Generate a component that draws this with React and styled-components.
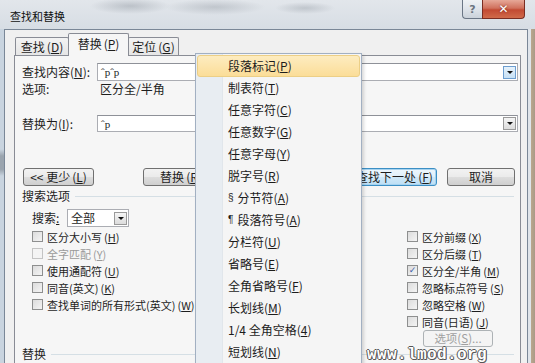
import React from 'react';
import styled, {createGlobalStyle, css} from 'styled-components';

const GlobalStyle = createGlobalStyle`
	html, body {
		margin: 0;
		padding: 0;
		background: #cfd8e2;
	}
	body {
		font-family: "Noto Sans CJK SC", "Noto Sans", sans-serif;
	}
`

const Window = styled.div`
	position: relative;
	width: 535px;
	height: 363px;
	overflow: hidden;
	display: flex;
	flex-direction: column;
	background: linear-gradient(90deg, #c3cfdb 0, #d3dce6 50%, #cdd7e2 100%);
	font-size: 12px;
	color: #1e1e1e;
`

const TitleBar = styled.div`
	height: 29px;
	flex: none;
	display: flex;
	justify-content: space-between;
	align-items: flex-start;
	padding-left: 10px;
	background:
		radial-gradient(ellipse 40px 8px at 130px 6px, rgba(120, 128, 138, .35), transparent),
		radial-gradient(ellipse 50px 8px at 215px 7px, rgba(120, 128, 138, .3), transparent),
		radial-gradient(ellipse 30px 6px at 305px 8px, rgba(120, 128, 138, .3), transparent),
		linear-gradient(180deg, #e2e6eb 0, #d7dde4 100%);
`

const Title = styled.div`
	font-size: 11px;
	line-height: 14px;
	padding-top: 9px;
	color: #111;
`

const Caption = styled.div`
	display: flex;
	margin-right: 10px;
`

const CaptionBtn = styled.div`
	height: 19px;
	box-sizing: border-box;
	display: flex;
	align-items: center;
	justify-content: center;
	border: 1px solid #6b7685;
	border-top: none;
	font-family: "DejaVu Sans", sans-serif;
	font-weight: bold;
`

const HelpBtn = styled(CaptionBtn)`
	width: 20px;
	border-bottom-left-radius: 4px;
	border-right: none;
	background: linear-gradient(180deg, #eef1f4 0, #dfe4ea 50%, #cbd2da 100%);
	color: #6b7580;
	font-size: 11px;
`

const CloseBtn = styled(CaptionBtn)`
	width: 43px;
	border-color: #7a2d22;
	border-bottom-right-radius: 4px;
	background: linear-gradient(180deg, #e6a898 0, #d0715d 45%, #c24a33 55%, #d06a4a 100%);
	color: #fff;
	font-size: 12px;
	text-shadow: 0 0 2px #6a1a10;
`

const Body = styled.div`
	flex: 1;
	min-height: 0;
	display: flex;
`

const LeftEdge = styled.div`
	width: 4px;
	flex: none;
	background: linear-gradient(180deg, #c9d4df 0, #c9d4df 36%, #9aa4ae 38%, #9aa4ae 42%, #c9d4df 44%);
`

const Client = styled.div`
	width: 524px;
	flex: none;
	box-sizing: border-box;
	border: 1px solid #7a8797;
	border-bottom: none;
	background: #f0f0f0;
	padding: 3px 0 0 9px;
	display: flex;
	flex-direction: column;
`

const RightEdge = styled.div`
	flex: 1;
	background: linear-gradient(90deg, #dfe4ea 0, #dfe4ea 3px, #bba78d 3px, #a89a88 100%);
`

const Tabs = styled.div`
	display: flex;
	align-items: flex-end;
	height: 22px;
	margin-left: 1px;
	flex: none;
`

const Tab = styled.div`
	width: ${p => p.$w}px;
	margin-left: ${p => p.$first ? 0 : -1}px;
	box-sizing: border-box;
	height: 18px;
	border: 1px solid #898c95;
	border-bottom: none;
	border-radius: 2px 2px 0 0;
	background: linear-gradient(180deg, #f3f3f3 0, #e6e6e6 100%);
	display: flex;
	align-items: center;
	justify-content: center;
	line-height: 14px;
	${p => p.$active && css`
		height: 23px;
		margin-bottom: -1px;
		position: relative;
		z-index: 1;
		background: #f6f6f6;
		padding-bottom: 3px;
	`}
`

const Panel = styled.div`
	width: 507px;
	flex: 1;
	box-sizing: border-box;
	border: 1px solid #898c95;
	border-bottom: none;
	background: #f6f6f6;
	padding: 7px 2px 0 7px;
	display: flex;
	flex-direction: column;
	overflow: hidden;
`

const Row = styled.div`
	display: flex;
	align-items: center;
	flex: none;
	height: ${p => p.$h}px;
	margin-top: ${p => p.$mt || 0}px;
	padding-left: ${p => p.$pl || 0}px;
	line-height: 14px;
`

const Label = styled.div`
	width: ${p => p.$w}px;
	flex: none;
	white-space: nowrap;
`

const TextBox = styled.div`
	flex: 1;
	height: 100%;
	box-sizing: border-box;
	border: 1px solid #abadb3;
	border-top-color: #8e9198;
	background: #fff;
	display: flex;
	align-items: center;
	justify-content: space-between;
	padding-left: 3px;
	font-family: "Liberation Serif", serif;
	font-size: 11px;
`

const DropBtn = styled.div`
	width: 13px;
	height: 13px;
	box-sizing: border-box;
	margin-right: 1px;
	border: 1px solid ${p => p.$hot ? '#6d9ed0' : '#9a9a9a'};
	background: ${p => p.$hot
		? 'linear-gradient(180deg, #e6f2fb 0, #c6e0f5 100%)'
		: 'linear-gradient(180deg, #f5f5f5 0, #dcdcdc 100%)'};
	display: flex;
	align-items: center;
	justify-content: center;

	&::after {
		content: '';
		border-left: 3px solid transparent;
		border-right: 3px solid transparent;
		border-top: 3px solid #111;
	}
`

const Buttons = styled.div`
	display: flex;
	height: 18px;
	margin-top: 36px;
	flex: none;
`

const Button = styled.div`
	width: ${p => p.$w}px;
	margin-left: ${p => p.$ml}px;
	padding-left: ${p => p.$shift || 0}px;
	box-sizing: border-box;
	height: 18px;
	border: 1px solid #707070;
	border-radius: 3px;
	background: linear-gradient(180deg, #f2f2f2 0, #ebebeb 48%, #dddddd 52%, #cfcfcf 100%);
	display: flex;
	align-items: center;
	justify-content: center;
	line-height: 14px;
	white-space: nowrap;
	${p => p.$default && css`
		border-color: #3c8fc4;
		box-shadow: inset 0 0 0 1px #a6d3f0;
		background: linear-gradient(180deg, #eef7fd 0, #e0f0fb 48%, #cfe8f8 52%, #bddff5 100%);
	`}
	${p => p.$disabled && css`
		border-color: #adb2b5;
		background: #f4f4f4;
		color: #a0a0a0;
	`}
`

const Section = styled.div`
	display: flex;
	align-items: center;
	height: 14px;
	flex: none;
	margin-top: ${p => p.$mt}px;
	line-height: 14px;
	gap: 5px;

	&::after {
		content: '';
		flex: 1;
		height: 1px;
		margin-right: 4px;
		background: #d5dfe5;
	}
`

const Select = styled.div`
	width: 62px;
	height: 18px;
	box-sizing: border-box;
	border: 1px solid #abadb3;
	background: #fff;
	display: flex;
	align-items: center;
	justify-content: space-between;
	padding-left: 3px;
`

const OptionGrid = styled.div`
	display: grid;
	grid-template-columns: 375px 1fr;
	grid-auto-rows: 17px;
	margin-top: 1px;
	padding-left: 10px;
	flex: none;
	font-size: 11px;
	line-height: 14px;
`

const Check = styled.div`
	display: flex;
	align-items: center;
	gap: 4px;
	white-space: nowrap;
	grid-column: ${p => p.$col};
	color: ${p => p.$disabled ? '#9a9a9a' : 'inherit'};
`

const Box = styled.span`
	width: 11px;
	height: 11px;
	box-sizing: border-box;
	flex: none;
	border: 1px solid ${p => p.$disabled ? '#c4c4c4' : '#8e8f8f'};
	background: ${p => p.$disabled ? '#f4f4f4' : 'linear-gradient(135deg, #dcdcdc 0, #f4f4f4 100%)'};
	display: flex;
	align-items: center;
	justify-content: center;
	font-family: "DejaVu Sans", sans-serif;
	font-size: 9px;
	line-height: 9px;
	color: #3b5fa8;
`

const OptionsBtn = styled(Button)`
	grid-column: 2;
	align-self: start;
	height: 17px;
	font-size: 11.5px;
	line-height: 12px;
	padding-bottom: 1px;
`

const Acc = styled.span`
	margin-left: ${p => p.$gap || 0}px;
	& > u {
		text-underline-offset: 1px;
	}
`

const Menu = styled.div`
	position: absolute;
	left: 195px;
	top: 53px;
	width: 167px;
	height: 320px;
	box-sizing: border-box;
	border: 1px solid #a2b0c2;
	background: linear-gradient(90deg, #e8edf2 0, #e8edf2 26px, #e1e6eb 26px, #e1e6eb 27px, #f5f5f5 27px);
	padding-top: 1px;
	box-shadow: 2px 2px 3px rgba(0, 0, 0, .15);
	z-index: 5;
`

const MenuItem = styled.div`
	height: 22px;
	box-sizing: border-box;
	margin: 0 1px;
	padding-left: 30px;
	border: 1px solid transparent;
	border-radius: 3px;
	display: flex;
	align-items: center;
	line-height: 14px;
	color: #1c1c1c;
	white-space: nowrap;
	${p => p.$active && css`
		border-color: #eccf86;
		background: linear-gradient(180deg, #fdecc0 0, #fbdd98 100%);
	`}
`

const Sym = styled.span`
	font-family: "Liberation Sans", sans-serif;
	font-size: 10px;
	margin-right: 4px;
`

const Watermark = styled.div`
	position: absolute;
	left: 367px;
	top: 349px;
	font-family: "Liberation Mono", monospace;
	font-weight: bold;
	font-size: 16px;
	line-height: 12px;
	letter-spacing: .4px;
	color: #fff;
	text-shadow: -1px 0 #555, 1px 0 #555, 0 -1px #555, 0 1px #555, 1px 1px #777;
	z-index: 6;
`

const A = ({k, gap}) => <Acc $gap={gap}>(<u>{k}</u>)</Acc>

const menuItems = [
	{text: '段落标记', k: 'P'},
	{text: '制表符', k: 'T'},
	{text: '任意字符', k: 'C'},
	{text: '任意数字', k: 'G'},
	{text: '任意字母', k: 'Y'},
	{text: '脱字号', k: 'R'},
	{sym: '§', text: '分节符', k: 'A'},
	{sym: '¶', text: '段落符号', k: 'A'},
	{text: '分栏符', k: 'U'},
	{text: '省略号', k: 'E'},
	{text: '全角省略号', k: 'F'},
	{text: '长划线', k: 'M'},
	{text: '1/4 全角空格', k: '4'},
	{text: '短划线', k: 'N'},
]

const options = [
	{col: 1, text: '区分大小写', k: 'H'},
	{col: 2, text: '区分前缀', k: 'X'},
	{col: 1, text: '全字匹配', k: 'Y', disabled: true},
	{col: 2, text: '区分后缀', k: 'T'},
	{col: 1, text: '使用通配符', k: 'U'},
	{col: 2, text: '区分全/半角', k: 'M', checked: true},
	{col: 1, text: '同音(英文)', k: 'K'},
	{col: 2, text: '忽略标点符号', k: 'S'},
	{col: 1, text: '查找单词的所有形式(英文)', k: 'W'},
	{col: 2, text: '忽略空格', k: 'W'},
	{col: 2, text: '同音(日语)', k: 'J'},
]

const App = () => {
	return (
		<Window>
			<GlobalStyle/>
			<TitleBar>
				<Title>查找和替换</Title>
				<Caption>
					<HelpBtn>?</HelpBtn>
					<CloseBtn>✕</CloseBtn>
				</Caption>
			</TitleBar>
			<Body>
				<LeftEdge/>
				<Client>
					<Tabs>
						<Tab $w={54} $first>查找<A k="D" gap={2}/></Tab>
						<Tab $w={61} $active>替换<A k="P" gap={2}/></Tab>
						<Tab $w={51}>定位<A k="G" gap={2}/></Tab>
					</Tabs>
					<Panel>
						<Row $h={18}>
							<Label $w={75}>查找内容<A k="N"/>:</Label>
							<TextBox>ˆpˆp<DropBtn $hot/></TextBox>
						</Row>
						<Row $h={14} $mt={1}>
							<Label $w={78}>选项:</Label>
							<span>区分全/半角</span>
						</Row>
						<Row $h={17} $mt={19}>
							<Label $w={75}>替换为<A k="I"/>:</Label>
							<TextBox>ˆp<DropBtn/></TextBox>
						</Row>
						<Buttons>
							<Button $w={71} $ml={1}>&lt;&lt; 更少<A k="L" gap={2}/></Button>
							<Button $w={76} $ml={49}>替换<A k="R" gap={2}/></Button>
							{/* 全部替换 lies under the open menu */}
							<Button $w={108} $ml={7}/>
							<Button $w={95} $ml={8} $shift={10} $default>查找下一处<A k="F" gap={2}/></Button>
							<Button $w={68} $ml={10}>取消</Button>
						</Buttons>
						<Section $mt={3}>搜索选项</Section>
						<Row $h={18} $mt={6} $pl={10}>
							<Label $w={35}>搜索<u>:</u></Label>
							<Select>全部<DropBtn/></Select>
						</Row>
						<OptionGrid>
							{options.map((o, i) => (
								<Check key={i} $col={o.col} $disabled={o.disabled}>
									<Box $disabled={o.disabled}>{o.checked ? '✓' : ''}</Box>
									<span>{o.text}<A k={o.k} gap={2}/></span>
								</Check>
							))}
							<OptionsBtn $w={70} $ml={16} $disabled>选项(<u>S</u>)...</OptionsBtn>
						</OptionGrid>
						<Section $mt={0}>替换</Section>
					</Panel>
				</Client>
				<RightEdge/>
			</Body>
			<Menu>
				{menuItems.map((m, i) => (
					<MenuItem key={i} $active={i === 0}>
						{m.sym && <Sym>{m.sym}</Sym>}{m.text}<A k={m.k}/>
					</MenuItem>
				))}
			</Menu>
			<Watermark>www.lmod.org</Watermark>
		</Window>
	);
};

export default App;
